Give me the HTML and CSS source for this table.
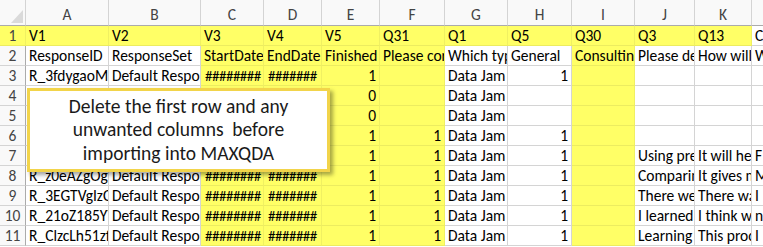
FILE: index.html
```html
<!DOCTYPE html>
<html>
<head>
<meta charset="utf-8">
<link rel="stylesheet" href="styles.css">
</head>
<body>
<div class="stage">
  <div class="sheet">
    <div class="corner"><span class="tri"></span></div>
    <div class="h">A</div><div class="h">B</div><div class="h">C</div><div class="h">D</div><div class="h">E</div><div class="h">F</div><div class="h">G</div><div class="h">H</div><div class="h">I</div><div class="h">J</div><div class="h">K</div><div class="h">L</div>

    <div class="r y">1</div>
    <div class="c y">V1</div><div class="c y">V2</div><div class="c y">V3</div><div class="c y">V4</div><div class="c y">V5</div><div class="c y">Q31</div><div class="c y">Q1</div><div class="c y">Q5</div><div class="c y">Q30</div><div class="c y">Q3</div><div class="c y">Q13</div><div class="c">C</div>

    <div class="r">2</div>
    <div class="c">ResponseID</div><div class="c">ResponseSet</div><div class="c y">StartDate</div><div class="c y">EndDate</div><div class="c y">Finished</div><div class="c y">Please correct</div><div class="c">Which type</div><div class="c">General</div><div class="c y">Consulting</div><div class="c">Please describe</div><div class="c">How will you</div><div class="c">W</div>

    <div class="r">3</div>
    <div class="c">R_3fdygaoMIx</div><div class="c">Default Response</div><div class="c y hs">########</div><div class="c y hs">#######</div><div class="c y n">1</div><div class="c y"></div><div class="c">Data Jam</div><div class="c n">1</div><div class="c y"></div><div class="c"></div><div class="c"></div><div class="c"></div>

    <div class="r">4</div>
    <div class="c"></div><div class="c"></div><div class="c y"></div><div class="c y"></div><div class="c y n">0</div><div class="c y"></div><div class="c">Data Jam</div><div class="c"></div><div class="c y"></div><div class="c"></div><div class="c"></div><div class="c"></div>

    <div class="r">5</div>
    <div class="c"></div><div class="c"></div><div class="c y"></div><div class="c y"></div><div class="c y n">0</div><div class="c y"></div><div class="c">Data Jam</div><div class="c"></div><div class="c y"></div><div class="c"></div><div class="c"></div><div class="c"></div>

    <div class="r">6</div>
    <div class="c"></div><div class="c"></div><div class="c y"></div><div class="c y"></div><div class="c y n">1</div><div class="c y n">1</div><div class="c">Data Jam</div><div class="c n">1</div><div class="c y"></div><div class="c"></div><div class="c"></div><div class="c"></div>

    <div class="r">7</div>
    <div class="c"></div><div class="c"></div><div class="c y"></div><div class="c y"></div><div class="c y n">1</div><div class="c y n">1</div><div class="c">Data Jam</div><div class="c n">1</div><div class="c y"></div><div class="c">Using previous</div><div class="c">It will help</div><div class="c">F</div>

    <div class="r">8</div>
    <div class="c">R_z0eAZgOgIx</div><div class="c">Default Response</div><div class="c y hs">########</div><div class="c y hs">#######</div><div class="c y n">1</div><div class="c y n">1</div><div class="c">Data Jam</div><div class="c n">1</div><div class="c y"></div><div class="c">Comparing</div><div class="c">It gives me</div><div class="c">M</div>

    <div class="r">9</div>
    <div class="c">R_3EGTVgIzCx</div><div class="c">Default Response</div><div class="c y hs">########</div><div class="c y hs">#######</div><div class="c y n">1</div><div class="c y n">1</div><div class="c">Data Jam</div><div class="c n">1</div><div class="c y"></div><div class="c">There were</div><div class="c">There was</div><div class="c">I</div>

    <div class="r">10</div>
    <div class="c">R_21oZ185YTx</div><div class="c">Default Response</div><div class="c y hs">########</div><div class="c y hs">#######</div><div class="c y n">1</div><div class="c y n">1</div><div class="c">Data Jam</div><div class="c n">1</div><div class="c y"></div><div class="c">I learned</div><div class="c">I think we</div><div class="c">n</div>

    <div class="r">11</div>
    <div class="c">R_ClzcLh51zfx</div><div class="c">Default Response</div><div class="c y hs">########</div><div class="c y hs">#######</div><div class="c y n">1</div><div class="c y n">1</div><div class="c">Data Jam</div><div class="c n">1</div><div class="c y"></div><div class="c">Learning</div><div class="c">This process</div><div class="c">I</div>
  </div>

  <div class="callout">
    <p>Delete the first row and any<br>unwanted columns&nbsp; before<br>importing into MAXQDA</p>
  </div>
</div>
</body>
</html>
```

FILE: styles.css
```css
html, body {
  margin: 0;
  padding: 0;
  background: #ffffff;
}

body {
  width: 763px;
  height: 247px;
  overflow: hidden;
  font-family: "Carlito", "Lato", "Liberation Sans", sans-serif;
}

.stage {
  position: relative;
  width: 763px;
  height: 247px;
  overflow: hidden;
}

.sheet {
  display: grid;
  grid-template-columns: 26px 83px 92px 63px 58px 58px 65px 63px 64px 63px 60px 57px 60px;
  grid-template-rows: 26px repeat(11, 20px);
  font-size: 15.5px;
  color: #000;
}

.sheet > div {
  box-sizing: border-box;
  border-right: 1px solid #d4d4d4;
  border-bottom: 1px solid #d4d4d4;
  white-space: nowrap;
  overflow: hidden;
  line-height: 20px;
}

.corner {
  position: relative;
  background: #f9f9f9;
  border-bottom-color: #ababab !important;
}

.tri {
  position: absolute;
  right: 2px;
  bottom: 2px;
  width: 0;
  height: 0;
  border-left: 12px solid transparent;
  border-bottom: 13px solid #dadada;
}

.h {
  background: #f9f9f9;
  color: #444;
  text-align: center;
  padding-top: 5px;
  border-bottom-color: #ababab !important;
}

.r {
  background: #f9f9f9;
  color: #444;
  text-align: center;
  border-right-color: #ababab !important;
}

.c {
  padding: 0 3px;
  background: #ffffff;
}

.y {
  background: #ffff66;
  border-right-color: #f0f062 !important;
  border-bottom-color: #ecec60 !important;
}

.hs {
  font-size: 15px;
  letter-spacing: -0.5px;
  padding-left: 4px;
}

.n {
  text-align: right;
}

.callout {
  position: absolute;
  left: 27px;
  top: 88px;
  width: 303px;
  height: 84px;
  box-sizing: border-box;
  background: #ffffff;
  border: 3px solid #f2d44a;
  box-shadow: 3px 3px 4px rgba(0, 0, 0, 0.35);
  display: flex;
  align-items: center;
  justify-content: center;
}

.callout p {
  margin: 0;
  text-align: center;
  font-size: 19.5px;
  line-height: 23.5px;
  color: #1a1a1a;
}
```
